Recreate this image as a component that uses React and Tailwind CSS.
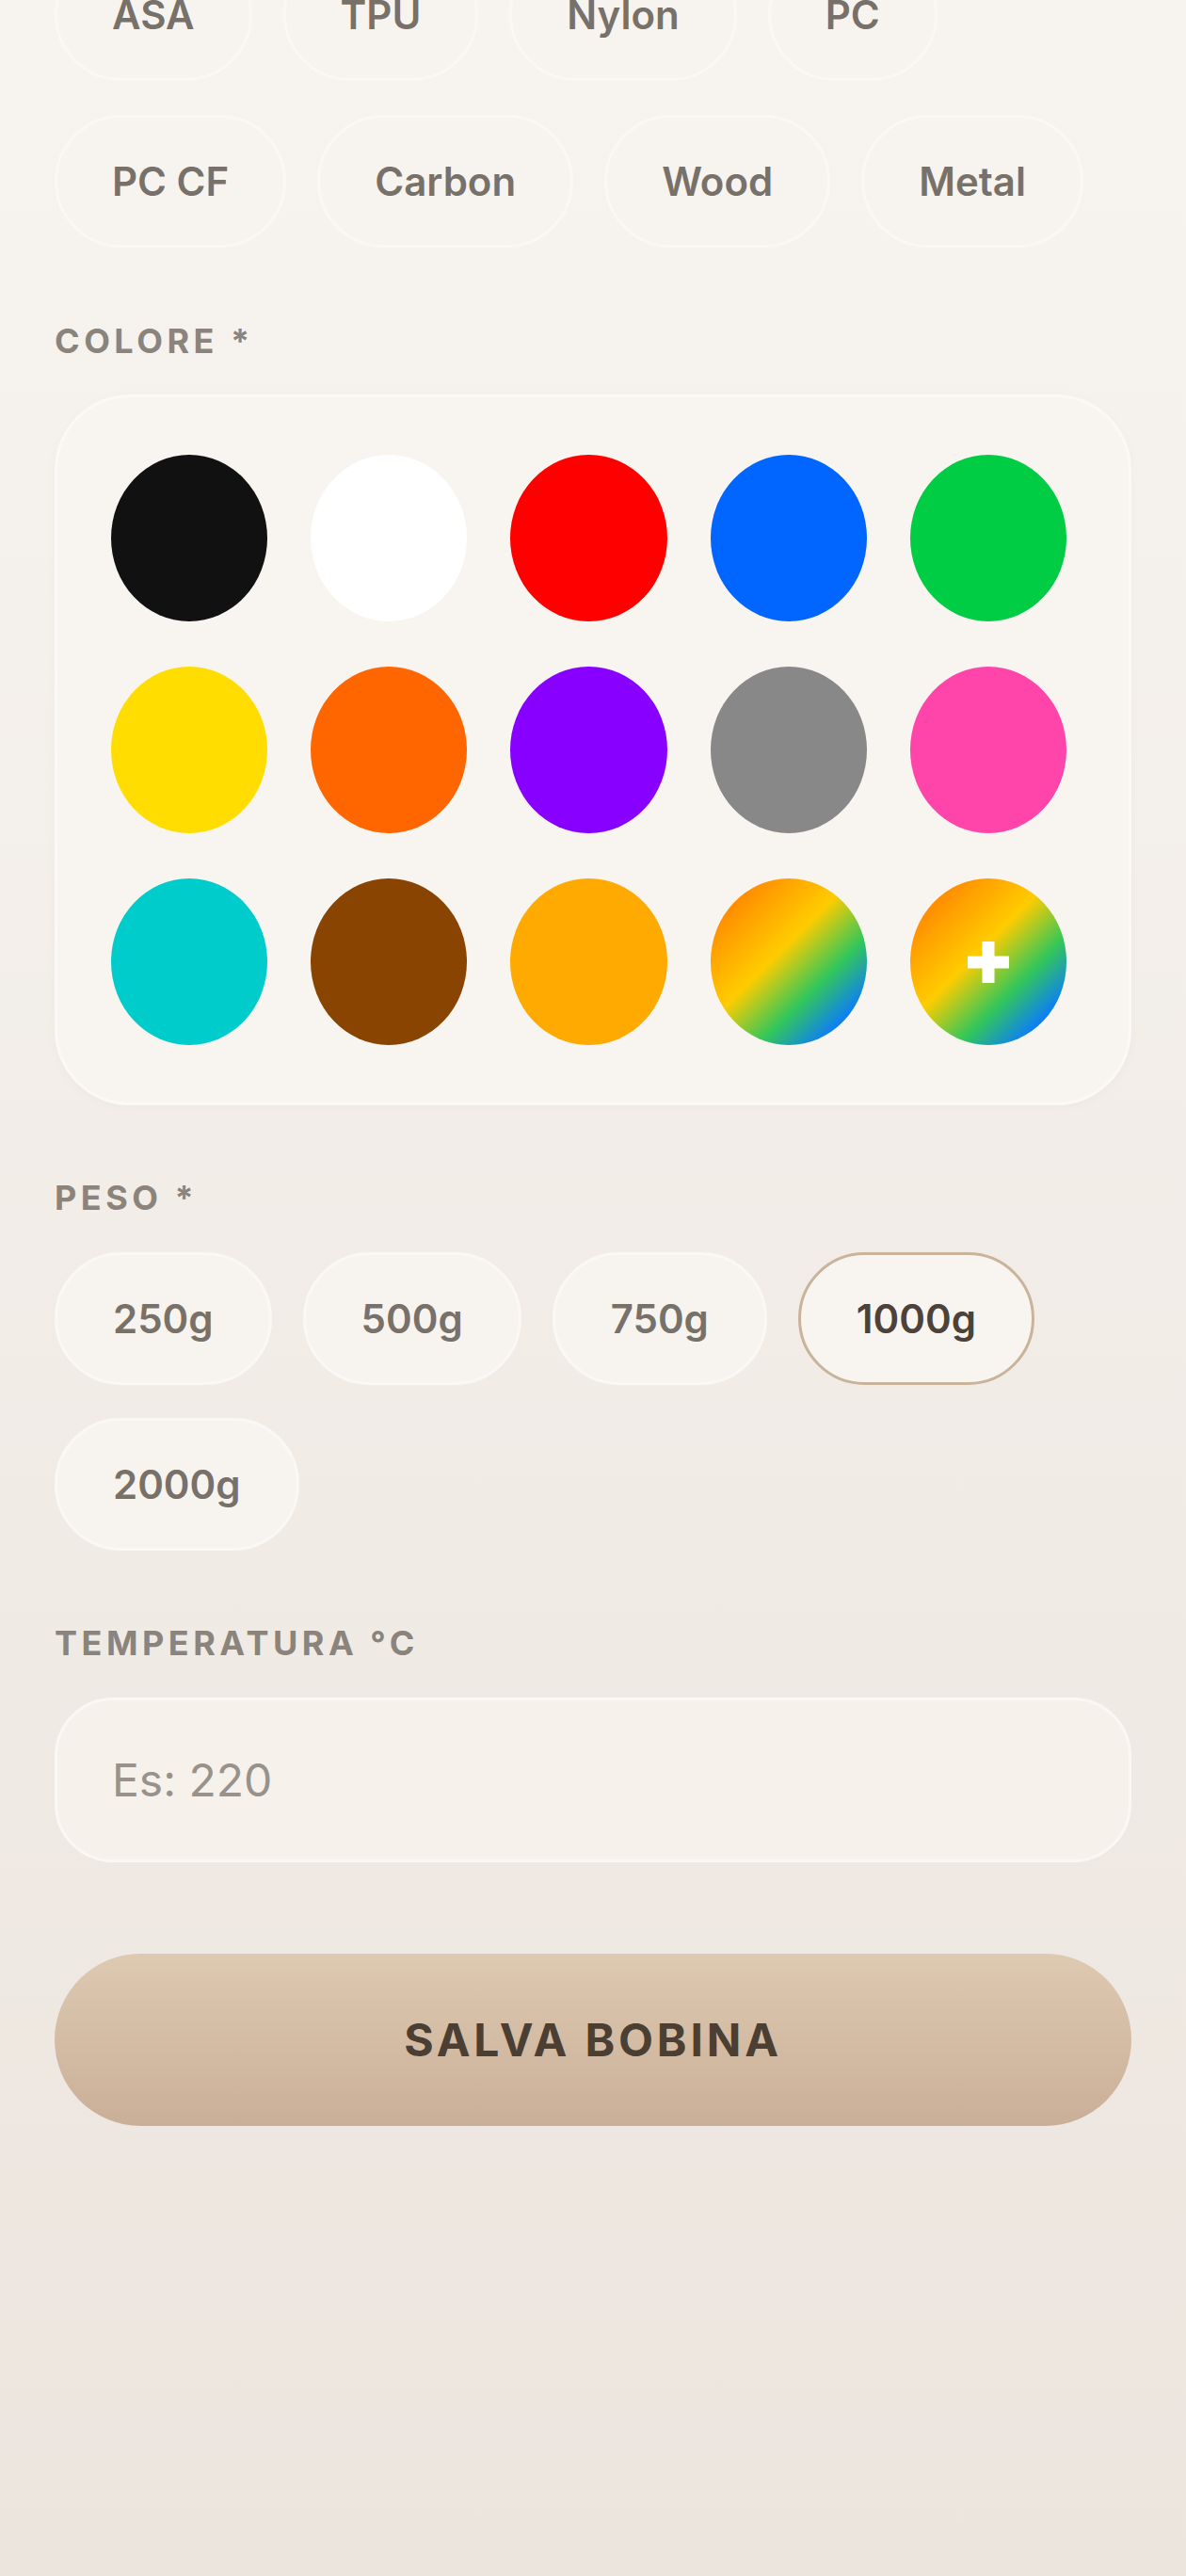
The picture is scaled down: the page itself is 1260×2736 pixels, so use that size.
import React from "react";

const materials1 = ["ASA", "TPU", "Nylon", "PC"];
const materials2 = ["PC CF", "Carbon", "Wood", "Metal"];
const weights = ["250g", "500g", "750g", "1000g", "2000g"];

const colors = [
  "bg-[#111111]",
  "bg-[#ffffff]",
  "bg-[#ff0000]",
  "bg-[#0066ff]",
  "bg-[#00cc44]",
  "bg-[#ffdd00]",
  "bg-[#ff6600]",
  "bg-[#8800ff]",
  "bg-[#888888]",
  "bg-[#ff44aa]",
  "bg-[#00cccc]",
  "bg-[#884400]",
  "bg-[#ffaa00]",
];

const rainbow =
  "bg-[linear-gradient(135deg,#ff6a00_0%,#ffa200_24%,#ffcc00_44%,#34c759_66%,#0a7aff_86%,#2f7dff_100%)]";

function Chip({ label, selected, wide }) {
  const pad = wide ? "px-[59px]" : "px-[58px]";
  return (
    <div
      className={
        selected
          ? "h-[141px] " + pad + " rounded-full flex items-center justify-center bg-[#f8f5f1] border-[3px] border-[#c9b39b] text-[42px] font-semibold text-[#4e4238]"
          : "h-[141px] " + pad + " rounded-full flex items-center justify-center bg-[#f7f4ef] border-[3px] border-[#faf8f5] text-[42px] font-semibold text-[#78716a]"
      }
    >
      {label}
    </div>
  );
}

function Label({ children, first }) {
  return (
    <div
      className={
        (first ? "mt-[75px] mb-[33px]" : "mt-[74px] mb-[34px]") +
        " h-[48px] flex items-center text-[36px] leading-[48px] font-bold tracking-[0.125em] text-[#8a847c]"
      }
    >
      {children}
    </div>
  );
}

export default function App() {
  return (
    <div className="min-h-[2736px] w-full bg-gradient-to-b from-[#f7f4f0] to-[#ece5de] px-[58px] font-['Inter','Noto_Sans',sans-serif] overflow-hidden">
      <div className="-mt-[55px] flex flex-col gap-y-[36px]">
        <div className="flex gap-x-[33px]">
          {materials1.map((m) => (
            <Chip key={m} label={m} />
          ))}
        </div>
        <div className="flex gap-x-[33px]">
          {materials2.map((m) => (
            <Chip key={m} label={m} />
          ))}
        </div>
      </div>

      <Label first>COLORE *</Label>
      <div className="rounded-[80px] bg-[#f8f5f0] border-[3px] border-[#fbf9f7] pl-[57px] pr-[66px] pt-[61px] pb-[61px] grid grid-cols-5 gap-x-[46px] gap-y-[48px] shadow-[0_2px_10px_rgba(120,100,80,0.04)]">
        {colors.map((c, i) => (
          <div key={i} className={"h-[177px] w-full rounded-[50%] " + c} />
        ))}
        <div className={"h-[177px] w-full rounded-[50%] " + rainbow} />
        <div className={"h-[177px] w-full rounded-[50%] flex items-center justify-center " + rainbow}>
          <svg width="44" height="44" viewBox="0 0 44 44">
            <rect x="15.5" y="0" width="13" height="44" fill="#ffffff" />
            <rect x="0" y="15.5" width="44" height="13" fill="#ffffff" />
          </svg>
        </div>
      </div>

      <Label>PESO *</Label>
      <div className="flex flex-wrap gap-x-[33px] gap-y-[35px] pr-[60px]">
        {weights.map((w) => (
          <Chip key={w} label={w} wide selected={w === "1000g"} />
        ))}
      </div>

      <Label>TEMPERATURA °C</Label>
      <div className="h-[175px] rounded-[62px] bg-[#f6f1eb] border-[3px] border-[#faf8f5] flex items-center px-[58px]">
        <span className="text-[48px] text-[#98928a]">Es: 220</span>
      </div>

      <div className="mt-[97px] h-[183px] rounded-full bg-gradient-to-b from-[#dec9b1] to-[#caaf98] flex items-center justify-center">
        <span className="text-[48px] font-bold tracking-[0.08em] text-[#4b3e33]">SALVA BOBINA</span>
      </div>
    </div>
  );
}
